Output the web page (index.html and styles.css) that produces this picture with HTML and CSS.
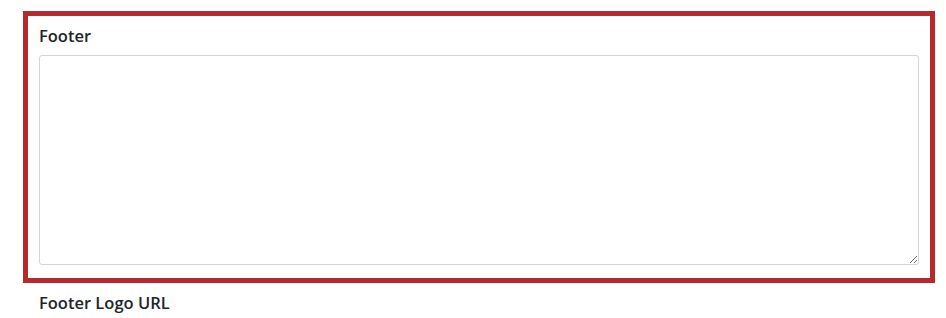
FILE: index.html
```html
<!DOCTYPE html>
<html>
<head>
<meta charset="utf-8">
<link rel="stylesheet" href="styles.css">
</head>
<body>
<div class="page">
  <div class="field field--highlight">
    <label class="field-label" for="footer">Footer</label>
    <textarea id="footer" class="field-input"></textarea>
  </div>
  <div class="field field--plain">
    <label class="field-label">Footer Logo URL</label>
  </div>
</div>
</body>
</html>
```
FILE: styles.css
```css
html, body {
  margin: 0;
  padding: 0;
  background: #ffffff;
}
.page {
  padding: 11px 11px 0 23px;
  font-family: "Open Sans", "Noto Sans", sans-serif;
  color: #212529;
}
.field--highlight {
  width: 912px;
  height: 272px;
  box-sizing: border-box;
  border: 5px solid #b52a2c;
  padding: 10px 11px 13px 11px;
}
.field-label {
  display: block;
  font-size: 16.5px;
  font-weight: 600;
  line-height: 20px;
  margin-bottom: 9px;
}
.field-input {
  display: block;
  width: 880px;
  height: 210px;
  box-sizing: border-box;
  border: 1px solid #d4d4d4;
  border-radius: 3px;
  margin: 0;
  padding: 6px 12px;
  font: inherit;
  resize: vertical;
  background: #fff;
}
.field--plain {
  padding: 10px 16px 0;
}
```
